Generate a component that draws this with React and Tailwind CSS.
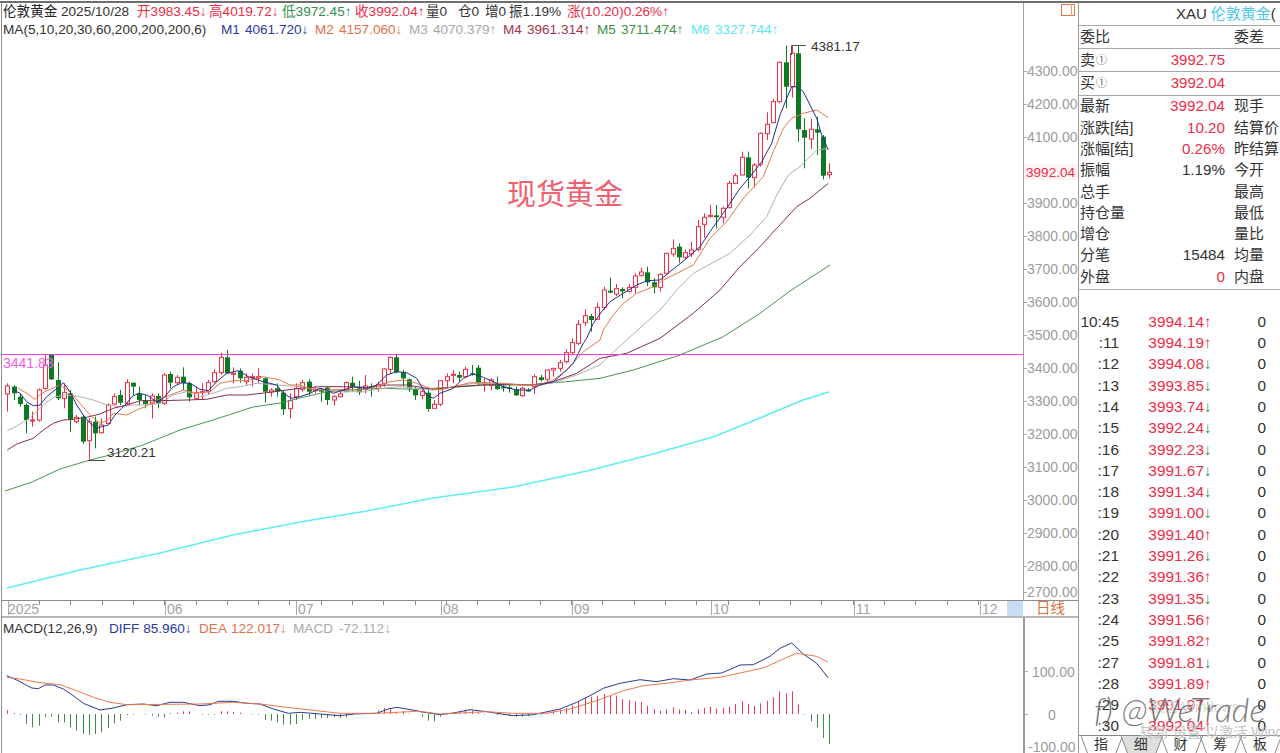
import React from "react";

const FONT = { fontFamily: '"Liberation Sans","Noto Sans CJK SC",sans-serif' };
const RED = "#ee2c46";
const GREEN = "#0b7a20";

// candles are read off the picture: [up, bodyTop, bodyBottom, high, low] in 3x crop units
const seg = (base, rows) =>
  rows.map(([up, t, b, h, l]) => ({
    up,
    t: base + t / 3,
    b: base + b / 3,
    h: base + h / 3,
    l: base + l / 3,
  }));

const candles = [
  ...seg(340, [
    [1, 138, 162, 130, 215], [0, 140, 160, 135, 180], [0, 170, 192, 160, 200], [0, 195, 240, 190, 280],
    [1, 240, 242, 215, 260], [1, 150, 240, 145, 245], [1, 75, 145, 45, 150], [0, 45, 118, 45, 120],
    [0, 120, 175, 68, 180], [1, 158, 175, 130, 205], [0, 160, 240, 150, 275], [1, 232, 245, 225, 250],
    [0, 230, 305, 225, 312], [1, 245, 302, 235, 360], [0, 245, 280, 230, 325], [1, 255, 278, 235, 280],
    [1, 195, 250, 190, 250], [1, 170, 192, 160, 195], [0, 165, 188, 150, 195], [1, 128, 190, 118, 195],
    [0, 128, 140, 128, 165], [0, 160, 180, 140, 195], [0, 180, 192, 165, 205], [1, 168, 190, 160, 235],
    [0, 168, 190, 160, 205], [1, 105, 190, 100, 195], [0, 102, 128, 95, 145], [1, 112, 128, 105, 135],
    [0, 110, 130, 82, 150], [0, 130, 172, 125, 185], [1, 158, 175, 140, 180], [1, 155, 157, 130, 178],
    [1, 128, 155, 120, 165], [1, 98, 125, 88, 130], [1, 52, 98, 38, 105], [0, 52, 100, 30, 100],
    [1, 100, 102, 82, 130], [0, 92, 115, 85, 128], [1, 112, 125, 100, 135], [1, 110, 112, 100, 140],
    [1, 110, 114, 85, 130], [0, 115, 155, 112, 188], [1, 150, 156, 145, 170], [0, 145, 155, 130, 170],
    [0, 158, 208, 150, 225], [1, 182, 206, 160, 235], [1, 145, 170, 130, 180],
  ]),
  ...seg(340, [
    [1, 128, 148, 120, 155], [0, 125, 155, 118, 165], [1, 148, 152, 140, 160], [0, 150, 155, 145, 185],
    [0, 143, 180, 140, 195], [1, 170, 180, 165, 197], [1, 162, 170, 155, 172], [1, 128, 155, 125, 157],
    [0, 128, 140, 110, 155], [0, 145, 157, 122, 165], [1, 138, 148, 105, 160], [0, 140, 142, 130, 170],
    [1, 133, 145, 125, 155], [1, 87, 130, 85, 140], [1, 52, 88, 50, 100], [0, 52, 97, 42, 100],
    [0, 97, 115, 90, 140], [0, 118, 145, 115, 155], [0, 148, 166, 140, 180], [1, 155, 166, 150, 178],
    [0, 158, 207, 145, 215], [1, 193, 205, 180, 205], [1, 122, 193, 120, 198], [1, 110, 122, 100, 145],
    [1, 103, 106, 90, 130], [0, 105, 113, 95, 125], [1, 88, 110, 80, 115], [0, 100, 104, 75, 107],
    [0, 83, 130, 75, 135], [1, 128, 132, 115, 155], [1, 120, 137, 115, 150], [0, 130, 147, 110, 150],
    [0, 140, 145, 135, 155], [0, 142, 146, 135, 158], [0, 148, 166, 140, 168], [1, 145, 167, 140, 170],
    [0, 150, 153, 145, 155], [1, 110, 140, 103, 162], [0, 112, 120, 105, 125], [1, 90, 118, 88, 130],
    [1, 85, 90, 85, 110], [1, 68, 85, 60, 95],
  ]),
  ...seg(230, [
    [1, 368, 395, 358, 400], [1, 338, 368, 325, 375], [1, 283, 340, 270, 345], [1, 257, 278, 238, 288],
    [0, 258, 270, 252, 305], [1, 232, 268, 218, 270], [1, 180, 232, 170, 240], [0, 182, 188, 143, 190],
    [1, 176, 192, 162, 198], [0, 177, 184, 172, 205], [1, 172, 184, 162, 188], [1, 138, 172, 130, 190],
    [1, 126, 136, 113, 140], [0, 127, 157, 110, 168], [0, 157, 172, 145, 190], [1, 133, 172, 130, 185],
    [1, 70, 130, 68, 135], [1, 55, 72, 28, 80], [0, 50, 82, 40, 98], [1, 68, 82, 58, 88],
    [1, 60, 72, 35, 82], [1, -10, 58, -30, 65],
  ]),
  ...seg(35, [
    [1, 547, 568, 535, 608], [1, 541, 545, 510, 548], [0, 541, 547, 510, 580], [1, 520, 547, 515, 565],
    [1, 445, 518, 438, 520], [1, 422, 445, 415, 448], [1, 367, 420, 350, 422], [0, 367, 428, 350, 460],
    [1, 390, 428, 385, 458], [1, 295, 388, 292, 395], [1, 268, 296, 232, 315], [1, 200, 263, 192, 265],
    [1, 82, 200, 80, 205], [0, 82, 155, 32, 220], [1, 55, 155, 30, 188], [0, 55, 283, 30, 320],
    [0, 285, 308, 250, 400], [1, 283, 312, 252, 342], [0, 283, 293, 245, 360], [0, 305, 422, 300, 433],
    [1, 412, 419, 385, 430],
  ]),
];

const cx = (i) => Math.round(7.3 + 6.276 * i) + 0.5;

const pts = (x0, y0, arr) => arr.map(([a, b]) => [x0 + a / 3, y0 + b / 3]);
const merge = (...groups) => {
  const out = [];
  groups.flat().forEach((p) => {
    if (!out.length || p[0] > out[out.length - 1][0]) out.push(p);
  });
  return out.map((p) => `${p[0].toFixed(1)},${p[1].toFixed(1)}`).join(" ");
};

const maLines = [
  {
    stroke: "#5eeef2",
    width: 1.5,
    d: merge([[7, 588], [80, 570], [160, 553], [233, 535], [300, 522], [367, 511], [433, 498], [513, 487], [587, 471], [653, 454], [713, 437], [760, 418], [803, 400], [829, 392]]),
  },
  {
    stroke: "#4d9455",
    width: 1,
    d: merge(
      [[5, 491], [32, 482], [60, 469], [90, 460], [110, 455], [143, 445], [180, 430], [213, 420], [253, 407], [280, 403], [300, 398]],
      pts(300, 340, [[80, 155], [150, 150], [250, 145], [340, 148], [460, 142], [560, 135], [680, 135], [800, 125], [900, 115]]),
      pts(560, 230, [[100, 445], [220, 420], [360, 375], [490, 320], [600, 250]]),
      [[790, 291], [830, 265]]
    ),
  },
  {
    stroke: "#b4b0b0",
    width: 1,
    d: merge(
      pts(0, 340, [[22, 272], [50, 258], [80, 240], [110, 215], [135, 190], [165, 170], [200, 165], [240, 170], [280, 180], [320, 195], [360, 200], [400, 195], [440, 195], [480, 190], [520, 165], [560, 155], [600, 170], [640, 160], [680, 145], [720, 140], [770, 130], [830, 135]]),
      pts(300, 340, [[0, 140], [60, 148], [130, 155], [190, 155], [250, 145], [300, 140], [350, 145], [400, 150], [460, 140], [520, 130], [590, 130], [650, 133], [720, 135], [770, 125], [830, 105], [900, 75]]),
      pts(560, 230, [[110, 405], [150, 375], [200, 330], [250, 285], [300, 240], [350, 180], [400, 130]]),
      pts(700, 35, [[90, 655], [150, 600], [200, 545], [230, 480], [265, 420], [300, 395], [350, 345], [385, 340]])
    ),
  },
  {
    stroke: "#82304a",
    width: 1,
    d: merge(
      pts(0, 340, [[22, 330], [50, 312], [100, 295], [130, 270], [160, 250], [190, 240], [220, 238], [260, 232], [300, 222], [340, 205], [380, 195], [420, 182], [480, 182], [560, 180], [620, 178], [680, 165], [740, 165], [800, 158], [860, 150], [900, 145]]),
      pts(300, 340, [[60, 140], [130, 140], [200, 142], [260, 135], [320, 135], [400, 148], [470, 140], [540, 135], [620, 133], [700, 135], [760, 125], [830, 100], [900, 55]]),
      pts(560, 230, [[120, 410], [200, 370], [300, 325], [400, 250], [480, 180], [540, 110], [600, 50]]),
      pts(700, 35, [[165, 655], [230, 580], [290, 515], [330, 490], [385, 445]])
    ),
  },
  {
    stroke: "#e2794f",
    width: 1,
    d: merge(
      pts(0, 340, [[55, 145], [80, 160], [105, 178], [125, 160], [150, 148], [180, 135], [210, 155], [240, 190], [270, 225], [300, 250], [325, 240], [340, 220], [380, 225], [410, 210], [435, 200], [470, 180], [510, 165], [550, 150], [590, 160], [630, 155], [660, 130], [700, 122], [740, 122], [790, 110], [840, 120], [870, 135], [900, 135]]),
      pts(300, 340, [[40, 150], [80, 150], [130, 148], [180, 150], [230, 140], [270, 125], [310, 120], [350, 130], [390, 145], [420, 150], [460, 140], [510, 128], [560, 128], [610, 130], [660, 135], [720, 135], [760, 120], [800, 90], [850, 35], [900, 0]]),
      pts(560, 230, [[130, 300], [160, 255], [190, 220], [230, 190], [280, 170], [310, 150], [360, 125], [400, 105]]),
      pts(700, 35, [[30, 610], [80, 560], [130, 490], [190, 425], [220, 350], [250, 280], [275, 250], [310, 235], [350, 225], [385, 248]])
    ),
  },
  {
    stroke: "#22308c",
    width: 1,
    d: merge(
      pts(0, 340, [[40, 150], [60, 160], [80, 185], [100, 197], [120, 195], [140, 170], [165, 150], [190, 128], [210, 155], [230, 195], [250, 225], [270, 250], [290, 265], [305, 260], [325, 255], [345, 225], [365, 205], [380, 190], [395, 170], [415, 160], [440, 165], [470, 185], [490, 175], [520, 140], [545, 128], [570, 130], [600, 148], [625, 152], [650, 125], [680, 100], [715, 92], [745, 110], [790, 125], [830, 135], [850, 160], [875, 175], [900, 170]]),
      pts(300, 340, [[30, 160], [60, 145], [80, 150], [100, 160], [130, 150], [160, 140], [200, 145], [230, 135], [260, 105], [290, 95], [320, 98], [350, 115], [380, 165], [400, 175], [420, 160], [460, 145], [490, 115], [520, 102], [550, 112], [580, 125], [610, 140], [650, 150], [690, 150], [720, 135], [760, 125], [790, 100], [820, 70], [850, 10], [860, -5]]),
      pts(560, 230, [[100, 280], [125, 245], [150, 215], [190, 190], [230, 165], [262, 152], [300, 150], [330, 125], [380, 85], [420, 50], [450, 5]]),
      pts(700, 35, [[80, 520], [120, 460], [150, 425], [185, 380], [215, 325], [240, 240], [260, 190], [275, 155], [290, 155], [310, 170], [330, 210], [350, 250], [365, 300], [385, 345]])
    ),
  },
];

const diffLine = merge(
  pts(0, 595, [[20, 245], [50, 258], [95, 282], [115, 284], [135, 273], [160, 273], [190, 285], [220, 305], [250, 328], [300, 348], [340, 342], [380, 332], [430, 330], [470, 335], [510, 325], [550, 325], [600, 335], [630, 332], [655, 322], [700, 322], [740, 328], [780, 330], [820, 345], [865, 358], [900, 355], [960, 360], [1020, 365], [1060, 360], [1130, 358], [1165, 345], [1190, 340], [1250, 350]]),
  pts(420, 595, [[0, 353], [60, 362], [100, 357], [150, 347], [200, 353], [280, 365], [340, 362], [420, 345], [470, 325], [510, 305], [550, 283], [600, 268], [660, 257], [710, 263], [760, 254], [810, 258], [860, 240], [905, 237], [960, 213], [1000, 212], [1050, 187], [1080, 163], [1115, 147], [1150, 180], [1190, 208], [1225, 252]])
);
const deaLine = merge(
  pts(0, 595, [[20, 250], [60, 255], [120, 266], [180, 272], [230, 290], [280, 310], [330, 325], [380, 332], [600, 330], [700, 325], [780, 330], [860, 340], [950, 350], [1020, 358], [1130, 358], [1250, 352]]),
  pts(420, 595, [[0, 352], [60, 360], [200, 353], [280, 358], [380, 358], [450, 345], [530, 320], [610, 290], [670, 275], [740, 268], [810, 258], [900, 250], [1030, 222], [1090, 195], [1130, 178], [1190, 187], [1225, 205]])
);

const hist = [
  12, 3, -3, -30, -40, -35, -8, -8, -25, -25, -40, -50, -60, -62, -60, -55, -42, -28, -20, -3, -2, 0, -2, -5, -8, -10,
  3, 4, 8, 8, 0, -2, -2, -2, 8, 8, 6, 4, 0, -2, -2, -18, -20, -25, -32, -32, -30, -18, -15, -15, -12, -12, -10, -12,
  -10, -3, 0, 2, 2, 10, 18, 14, 4, 8, 2, 0,
  -8, -20, -22, -8, 2, 4, 5, 12, 10, 4, -2, 0, -3, -3, -6, -8, -8, -6, -2, -3, 3, 8, 14, 18, 26, 38, 48, 52, 55, 60,
  55, 55, 45, 42, 38, 36, 24, 14, 10, 14, 20, 14, 12, 5, 14, 18, 22, 16, 18, 22, 30, 38, 30, 24, 32, 40, 50, 68, 62,
  68, 28, -2, -22, -40, -72, -90,
];

const priceLabels = [
  ["4300.00", 71], ["4200.00", 104], ["4100.00", 137], ["3900.00", 203], ["3800.00", 236], ["3700.00", 269],
  ["3600.00", 302], ["3500.00", 335], ["3400.00", 368], ["3300.00", 401], ["3200.00", 434], ["3100.00", 467],
  ["3000.00", 500], ["2900.00", 533], ["2800.00", 566], ["2700.00", 592],
];

const months = [["2025", 8, 8], ["06", 165, 167], ["07", 296, 298], ["08", 441, 443], ["09", 572, 574], ["10", 711, 713], ["11", 854, 856], ["12", 980, 982]];

const head1 = [
  ["w-[58px]", "伦敦黄金", "text-[#222]"],
  ["w-[76px]", "2025/10/28", "text-[#333]"],
  ["w-[72px]", "开3983.45↓", "text-[#ee2c46]"],
  ["w-[73px]", "高4019.72↓", "text-[#ee2c46]"],
  ["w-[73px]", "低3972.45↑", "text-[#2f8f4a]"],
  ["w-[71px]", "收3992.04↑", "text-[#ee2c46]"],
  ["w-[32px]", "量0", "text-[#333]"],
  ["w-[27px]", "仓0", "text-[#333]"],
  ["w-[24px]", "增0", "text-[#333]"],
  ["w-[58px]", "振1.19%", "text-[#333]"],
  ["", "涨(10.20)0.26%↑", "text-[#ee2c46]"],
];

const head2 = [
  ["M1", "4061.720↓", "text-[#2b3a9e]"],
  ["M2", "4157.060↓", "text-[#e2714a]"],
  ["M3", "4070.379↑", "text-[#a8a8a8]"],
  ["M4", "3961.314↑", "text-[#a5354a]"],
  ["M5", "3711.474↑", "text-[#3f8f47]"],
  ["M6", "3327.744↑", "text-[#5ce8f2]"],
];

const quoteRows = [
  ["最新", "3992.04", "text-[#ee2c46]", "现手"],
  ["涨跌[结]", "10.20", "text-[#ee2c46]", "结算价"],
  ["涨幅[结]", "0.26%", "text-[#ee2c46]", "昨结算"],
  ["振幅", "1.19%", "text-[#333]", "今开"],
  ["总手", "", "", "最高"],
  ["持仓量", "", "", "最低"],
  ["增仓", "", "", "量比"],
  ["分笔", "15484", "text-[#333]", "均量"],
  ["外盘", "0", "text-[#ee2c46]", "内盘"],
];

const ticks = [
  ["10:45", "3994.14", 1], [":11", "3994.19", 1], [":12", "3994.08", 0], [":13", "3993.85", 0], [":14", "3993.74", 0],
  [":15", "3992.24", 0], [":16", "3992.23", 0], [":17", "3991.67", 0], [":18", "3991.34", 0], [":19", "3991.00", 0],
  [":20", "3991.40", 1], [":21", "3991.26", 0], [":22", "3991.36", 1], [":23", "3991.35", 0], [":24", "3991.56", 1],
  [":25", "3991.82", 1], [":27", "3991.81", 0], [":28", "3991.89", 1], [":29", "3991.97", 0], [":30", "3992.04", 1],
];

const tabs = ["指", "细", "财", "筹", "板"];

function MainChart() {
  return (
    <svg className="absolute inset-0" width="1021" height="597" viewBox="2 3 1021 597">
      {candles.map((c, i) => {
        const x = cx(i);
        const color = c.up ? RED : GREEN;
        if (!c.up) {
          return (
            <g key={i}>
              <line x1={x} x2={x} y1={c.h} y2={c.l} stroke={color} />
              <rect x={x - 2.5} y={c.t} width="5" height={Math.max(c.b - c.t, 1.5)} fill={color} />
            </g>
          );
        }
        return (
          <g key={i}>
            <line x1={x} x2={x} y1={c.h} y2={c.t} stroke={color} />
            <line x1={x} x2={x} y1={c.b} y2={c.l} stroke={color} />
            <rect x={x - 2} y={c.t} width="4" height={Math.max(c.b - c.t, 1)} fill="#fff" stroke={color} />
          </g>
        );
      })}
      {maLines.map((l) => (
        <polyline key={l.stroke} points={l.d} fill="none" stroke={l.stroke} strokeWidth={l.width} strokeLinejoin="round" />
      ))}
      <line x1="2" x2="1023" y1="354.5" y2="354.5" stroke="#f13ff0" />
      <text x="3" y="368" fontSize="14" fill="#f35cf0" style={FONT}>3441.83</text>
      <polyline points="791.5,55 791.5,45.5 806,45.5" fill="none" stroke="#555" />
      <text x="811" y="51" fontSize="13.5" fill="#333" style={FONT}>4381.17</text>
      <line x1="88" x2="105" y1="460.5" y2="460.5" stroke="#444" />
      <text x="107" y="457" fontSize="13.5" fill="#333" style={FONT}>3120.21</text>
    </svg>
  );
}

function PriceAxis() {
  return (
    <svg className="absolute inset-0" width="54" height="597" viewBox="1024 3 54 597">
      <rect x="1061.5" y="4.5" width="13" height="11" fill="none" stroke="#e8743b" />
      <line x1="1071.5" x2="1071.5" y1="4" y2="16" stroke="#e8a070" />
      {priceLabels.map(([t, y]) => (
        <g key={t}>
          <line x1="1024" x2="1027" y1={y + 0.5} y2={y + 0.5} stroke="#aaa" />
          <text x="1027" y={y + 5} fontSize="14" fill="#9c9c9c" style={FONT}>{t}</text>
        </g>
      ))}
      <rect x="1025" y="164" width="53" height="16" fill="#fdf3f3" />
      <text x="1026" y="177" fontSize="13.6" fill={RED} style={FONT}>3992.04</text>
    </svg>
  );
}

function DateAxis() {
  const tickXs = [];
  for (let x = 39; x < 1000; x += 31.3) tickXs.push(Math.round(x) + 0.5);
  return (
    <svg width="1005" height="16" viewBox="2 601 1005 16">
      {tickXs.map((x) => (
        <line key={x} x1={x} x2={x} y1="601" y2="605" stroke="#888" />
      ))}
      {months.map(([t, x, tx]) => (
        <g key={t}>
          <line x1={x + 0.5} x2={x + 0.5} y1="601" y2="615" stroke="#aaa" />
          <text x={tx} y="614" fontSize="14" fill="#a3a3a3" style={FONT}>{t}</text>
        </g>
      ))}
    </svg>
  );
}

function MacdChart() {
  return (
    <svg className="absolute inset-0" width="1021" height="134" viewBox="2 619 1021 134">
      {hist.map((v, i) => {
        const x = cx(i);
        return (
          <line
            key={i}
            x1={x}
            x2={x}
            y1="715"
            y2={715 - v / 3}
            stroke={v >= 0 ? "#f03a50" : "#3b8f48"}
          />
        );
      })}
      <polyline points={diffLine} fill="none" stroke="#2a3a94" strokeLinejoin="round" />
      <polyline points={deaLine} fill="none" stroke="#ea7a50" strokeLinejoin="round" />
    </svg>
  );
}

function MacdAxis() {
  return (
    <svg className="absolute inset-0" width="53" height="134" viewBox="1025 619 53 134">
      <line x1="1025" x2="1028" y1="672.5" y2="672.5" stroke="#aaa" />
      <line x1="1025" x2="1028" y1="715.5" y2="715.5" stroke="#aaa" />
      <text x="1032" y="678" fontSize="14" fill="#9c9c9c" style={FONT}>100.00</text>
      <text x="1048" y="721" fontSize="14" fill="#9c9c9c" style={FONT}>0</text>
      <text x="1028" y="753" fontSize="14" fill="#9c9c9c" style={FONT}>-100.00</text>
    </svg>
  );
}

function BookRow({ label, value, className }) {
  return (
    <div className={`flex items-center w-[146px] pl-[1px] justify-between ${className}`}>
      <span className="flex items-center">
        {label}
        <span className="ml-[1px] text-[11px] text-[#666]">①</span>
      </span>
      <span className="text-[#ee2c46]">{value}</span>
    </div>
  );
}

export default function App() {
  return (
    <div className="w-[1280px] h-[753px] overflow-hidden bg-white pt-[1px] relative text-[#333]" style={FONT}>
      <div className="flex h-full border-t-2 border-[#6e6e6e]">
        {/* left: charts */}
        <div className="ml-[1px] w-[1077px] shrink-0 flex flex-col border-l border-[#8c8c8c]">
          <div className="flex h-[597px]">
            <div className="relative w-[1021px]">
              <MainChart />
              <div className="relative pl-[1px] text-[13.6px] leading-[18px]">
                <div className="flex h-[18px] whitespace-nowrap">
                  {head1.map(([w, t, c]) => (
                    <span key={t} className={`${w} ${c} shrink-0`}>{t}</span>
                  ))}
                </div>
                <div className="flex h-[18px] whitespace-nowrap">
                  <span className="w-[218px] shrink-0 text-[#333]">MA(5,10,20,30,60,200,200,200,6)</span>
                  {head2.map(([k, v, c]) => (
                    <span key={k} className={`w-[94px] shrink-0 flex gap-[5px] ${c}`}>
                      <span>{k}</span>
                      <span>{v}</span>
                    </span>
                  ))}
                </div>
              </div>
              <div className="absolute left-[505px] top-[174px] text-[29px] leading-[36px] text-[#f0606f]">现货黄金</div>
            </div>
            <div className="relative flex-1 border-l border-[#a0a0a0]">
              <PriceAxis />
            </div>
          </div>

          <div className="flex h-[18px] border-t border-[#8c8c8c] border-b-2 border-b-[#b8b8b8]">
            <DateAxis />
            <div className="w-[16px] bg-[#c6ddf3]" />
            <div className="flex-1 flex items-center justify-center text-[14.5px] text-[#d9703e]">日线</div>
          </div>

          <div className="flex flex-1">
            <div className="relative w-[1021px]">
              <MacdChart />
              <div className="relative pl-[1px] pt-[2px] flex text-[13.6px] leading-[18px] whitespace-nowrap">
                <span className="w-[106px] text-[#333]">MACD(12,26,9)</span>
                <span className="w-[90px] flex gap-[4px] text-[#2b3a9e]"><span>DIFF</span><span>85.960↓</span></span>
                <span className="w-[94px] flex gap-[4px] text-[#e2714a]"><span>DEA</span><span>122.017↓</span></span>
                <span className="flex gap-[6px] text-[#a8a8a8]"><span>MACD</span><span>-72.112↓</span></span>
              </div>
            </div>
            <div className="relative flex-1 border-l-2 border-[#9a9a9a]">
              <MacdAxis />
            </div>
          </div>
        </div>

        {/* right: quote panel */}
        <div className="flex-1 min-w-0 flex flex-col border-l border-[#9a9a9a] text-[15px] whitespace-nowrap overflow-hidden">
          <div className="h-[23px] shrink-0 flex items-center pl-[97px] border-b border-[#a8a8a8]">
            <span className="text-[#333]">XAU</span>
            <span className="ml-[4px] text-[#4cc6ea]">伦敦黄金</span>
            <span className="text-[#333]">(</span>
          </div>
          <div className="h-[23px] shrink-0 flex items-center pl-[1px] border-b border-[#a8a8a8]">
            <span className="w-[154px]">委比</span>
            <span>委差</span>
          </div>
          <div className="h-[23px] shrink-0 border-b border-[#a8a8a8]">
            <BookRow label="卖" value="3992.75" className="h-full" />
          </div>
          <div className="h-[24px] shrink-0 border-b border-[#a8a8a8]">
            <BookRow label="买" value="3992.04" className="h-full" />
          </div>
          <div className="shrink-0 pb-[1px] border-b border-[#b4b4b4]">
            {quoteRows.map(([a, v, c, b]) => (
              <div key={a} className="h-[21.3px] flex items-center pl-[1px]">
                <span className="w-[145px] flex justify-between">
                  <span>{a}</span>
                  <span className={`text-[15.2px] ${c}`}>{v}</span>
                </span>
                <span className="ml-[9px]">{b}</span>
              </div>
            ))}
          </div>
          <div className="flex-1 min-h-0 pt-[21px] overflow-hidden text-[15.4px]">
            {ticks.map(([t, p, up]) => (
              <div key={t} className="h-[21.3px] flex items-center">
                <span className="w-[40px] text-right">{t}</span>
                <span className="w-[85px] text-right text-[#ee2c46]">{p}</span>
                <span className={`w-[8px] ${up ? "text-[#ee2c46]" : "text-[#2f8f4a]"}`}>{up ? "↑" : "↓"}</span>
                <span className="w-[54px] text-right">0</span>
              </div>
            ))}
          </div>
          <div className="h-[18px] shrink-0 flex pl-[2px] border-t border-[#888] text-[14px]">
            {tabs.map((t, i) => (
              <div key={t} className="relative w-[41.5px] flex items-center justify-center">
                <svg className="absolute left-0 top-0" width="42" height="17" viewBox="0 0 42 17">
                  {i === 1 && <polygon points="0,0 41.5,0 35,17 6.5,17" fill="#dedede" />}
                  <path d="M0 0 L6.5 17 M41.5 0 L35 17" fill="none" stroke="#888" />
                </svg>
                <span className="relative">{t}</span>
              </div>
            ))}
          </div>
        </div>
      </div>

      {/* screenshot overlays */}
      <div className="absolute left-[1150px] top-[697px] text-[14px] text-[#d8d8d8]">激活 Windows</div>
      <div className="absolute left-[1094px] top-[689px] text-[34px] leading-[40px] italic font-light text-[#555]/80 whitespace-nowrap" style={{ fontFamily: "Lato, sans-serif" }}>
        f) @WeTrade
      </div>
      <div className="absolute left-[1140px] top-[722px] text-[14px] text-[#c4c4c4] whitespace-nowrap">转到“设置”以激活 Windows</div>
    </div>
  );
}
